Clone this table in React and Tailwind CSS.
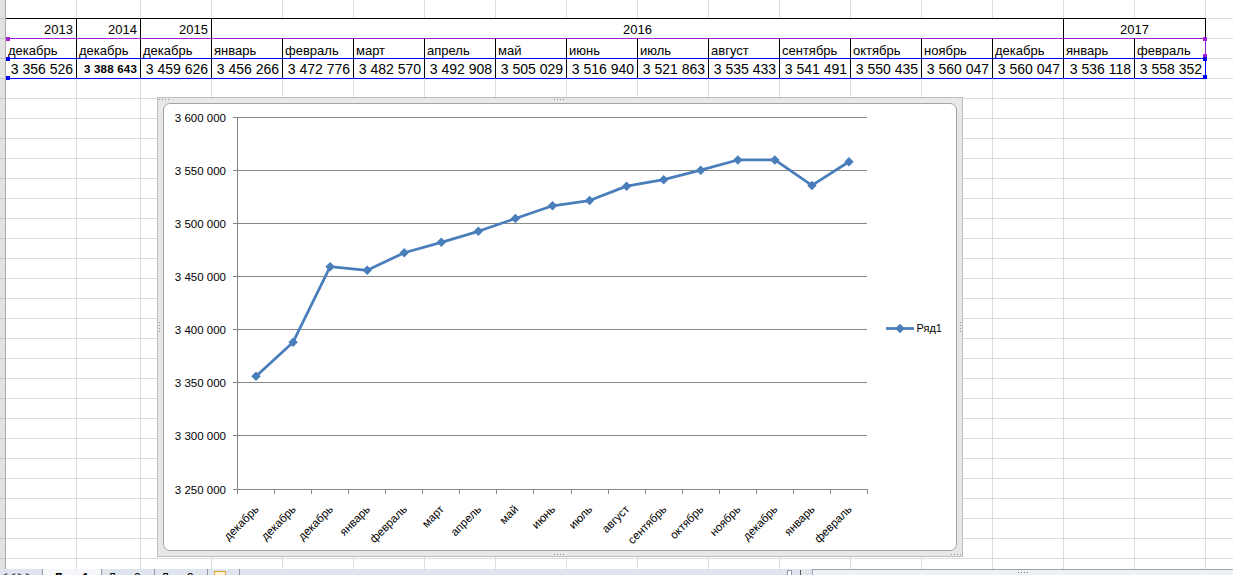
import React from "react";

const months = ["декабрь", "декабрь", "декабрь", "январь", "февраль", "март", "апрель", "май", "июнь", "июль", "август", "сентябрь", "октябрь", "ноябрь", "декабрь", "январь", "февраль"];
const values = [3356526, 3388643, 3459626, 3456266, 3472776, 3482570, 3492908, 3505029, 3516940, 3521863, 3535433, 3541491, 3550435, 3560047, 3560047, 3536118, 3558352];

const fmt = (n) => String(n).replace(/\B(?=(\d{3})+(?!\d))/g, " ");
const colClass = (i) => (i === 1 ? "w-[64px]" : "w-[71px]");

// chart geometry (page coordinates)
const gridY = [117, 170, 223, 276, 329, 382, 435, 489];
const yLabels = ["3 600 000", "3 550 000", "3 500 000", "3 450 000", "3 400 000", "3 350 000", "3 300 000", "3 250 000"];
const x0 = 237;
const x1 = 867;
const cw = (x1 - x0) / 17;
const vy = (v) => 489.5 - ((v - 3250000) * 372) / 350000;
const cx = (i) => x0 + 0.5 + cw * (i + 0.5);
const BLUE = "#4a7ebb";

function RowHead({ first }) {
  return (
    <div
      className={`w-[6px] shrink-0 bg-[#e2e2e2] border-r border-[#a9a9a9] ${first ? "" : "border-t border-t-[#c4c4c4]"}`}
    />
  );
}

function EmptyRow({ first }) {
  return (
    <div className={`flex shrink-0 ${first ? "h-[18px]" : "h-[20px]"}`}>
      <RowHead first={first} />
      {Array.from({ length: 18 }, (_, i) => (
        <div key={i} className={`${colClass(i)} shrink-0 border-r border-[#dadcdd] ${first ? "" : "border-t"}`} />
      ))}
    </div>
  );
}

function Diamond({ x, y, r = 4.75 }) {
  return <path d={`M${x} ${y - r}L${x + r} ${y}L${x} ${y + r}L${x - r} ${y}Z`} fill={BLUE} />;
}

function Grip({ className, vertical }) {
  return (
    <div className={`absolute flex gap-[2px] ${vertical ? "flex-col" : ""} ${className}`}>
      {[0, 1, 2, 3].map((d) => (
        <span key={d} className="block w-[1px] h-[1px] bg-[#8f8f8f]" />
      ))}
    </div>
  );
}

function Chart() {
  const pts = values.map((v, i) => [cx(i), vy(v)]);
  return (
    <div className="absolute left-[157px] top-[97px] w-[806px] h-[460px] border border-[#bdbdbd] bg-[#e8e8e8] p-[5px]">
      <div className="h-full w-full rounded-[7px] border border-[#a4a4a4] bg-white overflow-hidden">
        <svg width="792" height="446" viewBox="164 104 792 446" className="block">
          {gridY.map((y, k) => (
            <g key={y}>
              <line x1={x0 - 4} x2={x1} y1={y + 0.5} y2={y + 0.5} stroke="#868686" strokeWidth="1" />
              <text x="226" y={y + 5} textAnchor="end" fontSize="11.5" fill="#000">
                {yLabels[k]}
              </text>
            </g>
          ))}
          <line x1={x0 + 0.5} x2={x0 + 0.5} y1="117" y2="490" stroke="#868686" strokeWidth="1" />
          {Array.from({ length: 18 }, (_, j) => {
            const tx = Math.round(x0 + cw * j) + 0.5;
            return <line key={j} x1={tx} x2={tx} y1="489" y2="494" stroke="#868686" strokeWidth="1" />;
          })}
          {months.map((m, i) => {
            const lx = cx(i) + 3.5;
            return (
              <text key={i} x={lx} y="510" textAnchor="end" fontSize="11.5" fill="#000" transform={`rotate(-45 ${lx} 510)`}>
                {m}
              </text>
            );
          })}
          <polyline
            points={pts.map((p) => p.join(",")).join(" ")}
            fill="none"
            stroke={BLUE}
            strokeWidth="2.75"
            strokeLinejoin="round"
            strokeLinecap="round"
          />
          {pts.map(([x, y], i) => (
            <Diamond key={i} x={x} y={y} />
          ))}
          <line x1="886" x2="914" y1="328.5" y2="328.5" stroke={BLUE} strokeWidth="2.75" />
          <Diamond x={900} y={328.5} />
          <text x="916.5" y="332" fontSize="11" fill="#000">
            Ряд1
          </text>
        </svg>
      </div>
      <Grip className="left-[396px] top-[1px]" />
      <Grip className="left-[396px] bottom-[1px]" />
      <Grip className="left-[1px] top-[224px]" vertical />
      <Grip className="right-[1px] top-[224px]" vertical />
      <Grip className="left-[1px] top-[1px]" />
      <Grip className="right-[1px] bottom-[1px]" />
    </div>
  );
}

function Handle({ className }) {
  return <div className={`absolute w-[4px] h-[4px] ${className}`} />;
}

export default function App() {
  return (
    <div className="w-[1233px] h-[575px] overflow-hidden bg-white flex flex-col font-['Liberation_Sans',Arial,sans-serif] text-black">
      <div className="relative h-[569px] shrink-0 overflow-hidden flex flex-col">
        <EmptyRow first />

        {/* years */}
        <div className="flex h-[20px] shrink-0">
          <RowHead />
          {["2013", "2014", "2015"].map((y, i) => (
            <div
              key={y}
              className={`${colClass(i)} shrink-0 border-t border-r border-black flex items-end justify-end pr-[3px] pb-[2px] text-[13px] leading-none`}
            >
              {y}
            </div>
          ))}
          <div className="w-[852px] shrink-0 border-t border-r border-black flex items-end justify-center pb-[2px] text-[13px] leading-none">
            2016
          </div>
          <div className="w-[142px] shrink-0 border-t border-r border-black flex items-end justify-center pb-[2px] text-[13px] leading-none">
            2017
          </div>
          <div className="w-[71px] shrink-0 border-t border-r border-[#dadcdd]" />
        </div>

        {/* months */}
        <div className="flex h-[20px] shrink-0">
          <RowHead />
          {months.map((m, i) => (
            <div
              key={i}
              className={`${colClass(i)} shrink-0 border-t border-r border-black border-t-[#a11fd6] ${i === 16 ? "border-r-[#a11fd6]" : ""} flex items-end pl-[2px] pb-[1px] text-[13px] leading-none`}
            >
              {m}
            </div>
          ))}
          <div className="w-[71px] shrink-0 border-t border-r border-[#dadcdd]" />
        </div>

        {/* values */}
        <div className="flex h-[20px] shrink-0">
          <RowHead />
          {values.map((v, i) => (
            <div
              key={i}
              className={`${colClass(i)} shrink-0 border-t border-r border-black border-t-[#0000ff] ${i === 16 ? "border-r-[#0000ff]" : ""} flex items-end justify-end pr-[3px] leading-none ${i === 1 ? "pb-[3px] text-[11.5px] font-bold tracking-[0.2px]" : "pb-[2px] text-[14px]"}`}
            >
              {fmt(v)}
            </div>
          ))}
          <div className="w-[71px] shrink-0 border-t border-r border-[#dadcdd]" />
        </div>

        {/* row under the table */}
        <div className="flex h-[20px] shrink-0">
          <RowHead />
          {Array.from({ length: 18 }, (_, i) => (
            <div
              key={i}
              className={`${colClass(i)} shrink-0 border-t border-r border-[#dadcdd] ${i < 17 ? "border-t-[#0000ff]" : ""}`}
            />
          ))}
        </div>

        {Array.from({ length: 24 }, (_, r) => (
          <EmptyRow key={r} />
        ))}

        <Handle className="left-[6px] top-[37px] bg-[#a11fd6]" />
        <Handle className="left-[6px] top-[57px] bg-[#0000ff]" />
        <Handle className="left-[6px] top-[76px] bg-[#0000ff]" />
        <Handle className="left-[1203px] top-[37px] bg-[#a11fd6]" />
        <Handle className="left-[1203px] top-[54px] bg-[#a11fd6]" />
        <Handle className="left-[1203px] top-[57px] bg-[#0000ff]" />
        <Handle className="left-[1203px] top-[75px] bg-[#0000ff]" />

        <Chart />
      </div>

      {/* sheet tabs + scroll bar */}
      <div className="flex h-[24px] shrink-0 bg-[#dfe5ed] text-[12px] leading-none">
        <div className="w-[42px] shrink-0 flex gap-[3px] pl-[2px] pt-[1px] text-[10px] text-[#555]">
          <span>◂</span>
          <span>◂</span>
          <span>▸</span>
          <span>▸</span>
        </div>
        <div className="w-[60px] shrink-0 border-l border-r border-[#8e99a8] bg-[#f4f6f9] pl-[11px] pt-[3px] font-bold">Лист1</div>
        <div className="w-[53px] shrink-0 border-r border-[#8e99a8] pl-[6px] pt-[3px]">Лист2</div>
        <div className="w-[53px] shrink-0 border-r border-[#8e99a8] pl-[6px] pt-[3px]">Лист3</div>
        <div className="w-[32px] shrink-0 border-r border-[#8e99a8] pl-[6px] pt-[2px]">
          <span className="block w-[12px] h-[10px] border border-[#e0a030] bg-[#fff3d6]" />
        </div>
        <div className="flex-1" />
        <div className="w-[25px] shrink-0 flex items-start gap-[8px] pt-[1px]">
          <span className="block w-[5px] h-[6px] border border-[#8e99a8] bg-white" />
          <span className="block w-[1px] h-[6px] bg-[#555]" />
        </div>
        <div className="w-[421px] shrink-0 border-l border-t border-[#9aa5b3] bg-[#eef2f6] flex justify-center pt-[2px] gap-[2px]">
          {[0, 1, 2, 3].map((d) => (
            <span key={d} className="block w-[1px] h-[1px] bg-[#777]" />
          ))}
        </div>
      </div>
    </div>
  );
}
